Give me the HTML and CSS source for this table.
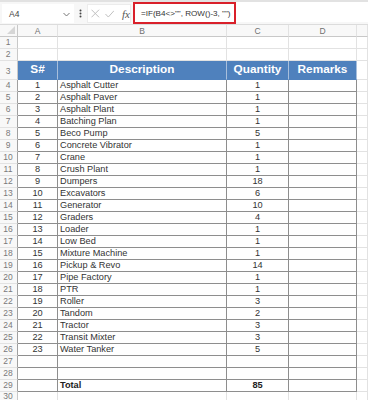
FILE: index.html
```html
<!DOCTYPE html>
<html>
<head>
<meta charset="utf-8">
<link rel="stylesheet" href="styles.css">
</head>
<body>
<div class="fbar">
  <div class="namebox"><span>A4</span>
    <svg class="chev" width="7" height="5" viewBox="0 0 7 5"><path d="M0.5 1 L3.5 4 L6.5 1" fill="none" stroke="#777" stroke-width="1"/></svg>
  </div>
  <div class="dots"><svg width="3" height="9" viewBox="0 0 3 9"><circle cx="1.5" cy="1.5" r="1" fill="#444"/><circle cx="1.5" cy="4.5" r="1" fill="#444"/><circle cx="1.5" cy="7.5" r="1" fill="#444"/></svg></div>
  <div class="tools">
    <svg width="9" height="9" viewBox="0 0 9 9"><path d="M0.5 0.5 L8.5 8.5 M8.5 0.5 L0.5 8.5" stroke="#bdbdbd" stroke-width="1"/></svg>
    <svg width="10" height="8" viewBox="0 0 10 8"><path d="M0.5 4 L3.5 7.2 L9.5 0.5" fill="none" stroke="#bdbdbd" stroke-width="1"/></svg>
    <span class="fx">fx</span>
  </div>
  <div class="formula">=IF(B4&lt;&gt;"", ROW()-3, "")</div>
  <div class="rest"></div>
</div>

<div class="sheet">
  <div class="row colhead"><div class="c rh corner"><span class="tri"></span></div><div class="c">A</div><div class="c">B</div><div class="c">C</div><div class="c">D</div><div class="c"></div></div>
  <div class="row"><div class="c rh">1</div><div class="c"></div><div class="c"></div><div class="c"></div><div class="c"></div><div class="c"></div></div>
  <div class="row"><div class="c rh">2</div><div class="c"></div><div class="c"></div><div class="c"></div><div class="c"></div><div class="c"></div></div>
  <div class="row head"><div class="c rh">3</div><div class="c h">S#</div><div class="c h">Description</div><div class="c h">Quantity</div><div class="c h">Remarks</div><div class="c"></div></div>
  <div class="row data"><div class="c rh">4</div><div class="c d n">1</div><div class="c d t">Asphalt Cutter</div><div class="c d n">1</div><div class="c d"></div><div class="c"></div></div>
  <div class="row data"><div class="c rh">5</div><div class="c d n">2</div><div class="c d t">Asphalt Paver</div><div class="c d n">1</div><div class="c d"></div><div class="c"></div></div>
  <div class="row data"><div class="c rh">6</div><div class="c d n">3</div><div class="c d t">Asphalt Plant</div><div class="c d n">1</div><div class="c d"></div><div class="c"></div></div>
  <div class="row data"><div class="c rh">7</div><div class="c d n">4</div><div class="c d t">Batching Plan</div><div class="c d n">1</div><div class="c d"></div><div class="c"></div></div>
  <div class="row data"><div class="c rh">8</div><div class="c d n">5</div><div class="c d t">Beco Pump</div><div class="c d n">5</div><div class="c d"></div><div class="c"></div></div>
  <div class="row data"><div class="c rh">9</div><div class="c d n">6</div><div class="c d t">Concrete Vibrator</div><div class="c d n">1</div><div class="c d"></div><div class="c"></div></div>
  <div class="row data"><div class="c rh">10</div><div class="c d n">7</div><div class="c d t">Crane</div><div class="c d n">1</div><div class="c d"></div><div class="c"></div></div>
  <div class="row data"><div class="c rh">11</div><div class="c d n">8</div><div class="c d t">Crush Plant</div><div class="c d n">1</div><div class="c d"></div><div class="c"></div></div>
  <div class="row data"><div class="c rh">12</div><div class="c d n">9</div><div class="c d t">Dumpers</div><div class="c d n">18</div><div class="c d"></div><div class="c"></div></div>
  <div class="row data"><div class="c rh">13</div><div class="c d n">10</div><div class="c d t">Excavators</div><div class="c d n">6</div><div class="c d"></div><div class="c"></div></div>
  <div class="row data"><div class="c rh">14</div><div class="c d n">11</div><div class="c d t">Generator</div><div class="c d n">10</div><div class="c d"></div><div class="c"></div></div>
  <div class="row data"><div class="c rh">15</div><div class="c d n">12</div><div class="c d t">Graders</div><div class="c d n">4</div><div class="c d"></div><div class="c"></div></div>
  <div class="row data"><div class="c rh">16</div><div class="c d n">13</div><div class="c d t">Loader</div><div class="c d n">1</div><div class="c d"></div><div class="c"></div></div>
  <div class="row data"><div class="c rh">17</div><div class="c d n">14</div><div class="c d t">Low Bed</div><div class="c d n">1</div><div class="c d"></div><div class="c"></div></div>
  <div class="row data"><div class="c rh">18</div><div class="c d n">15</div><div class="c d t">Mixture Machine</div><div class="c d n">1</div><div class="c d"></div><div class="c"></div></div>
  <div class="row data"><div class="c rh">19</div><div class="c d n">16</div><div class="c d t">Pickup &amp; Revo</div><div class="c d n">14</div><div class="c d"></div><div class="c"></div></div>
  <div class="row data"><div class="c rh">20</div><div class="c d n">17</div><div class="c d t">Pipe Factory</div><div class="c d n">1</div><div class="c d"></div><div class="c"></div></div>
  <div class="row data"><div class="c rh">21</div><div class="c d n">18</div><div class="c d t">PTR</div><div class="c d n">1</div><div class="c d"></div><div class="c"></div></div>
  <div class="row data"><div class="c rh">22</div><div class="c d n">19</div><div class="c d t">Roller</div><div class="c d n">3</div><div class="c d"></div><div class="c"></div></div>
  <div class="row data"><div class="c rh">23</div><div class="c d n">20</div><div class="c d t">Tandom</div><div class="c d n">2</div><div class="c d"></div><div class="c"></div></div>
  <div class="row data"><div class="c rh">24</div><div class="c d n">21</div><div class="c d t">Tractor</div><div class="c d n">3</div><div class="c d"></div><div class="c"></div></div>
  <div class="row data"><div class="c rh">25</div><div class="c d n">22</div><div class="c d t">Transit Mixter</div><div class="c d n">3</div><div class="c d"></div><div class="c"></div></div>
  <div class="row data"><div class="c rh">26</div><div class="c d n">23</div><div class="c d t">Water Tanker</div><div class="c d n">5</div><div class="c d"></div><div class="c"></div></div>
  <div class="row data"><div class="c rh">27</div><div class="c d"></div><div class="c d"></div><div class="c d"></div><div class="c d"></div><div class="c"></div></div>
  <div class="row data"><div class="c rh">28</div><div class="c d"></div><div class="c d"></div><div class="c d"></div><div class="c d"></div><div class="c"></div></div>
  <div class="row data total"><div class="c rh">29</div><div class="c d"></div><div class="c d t">Total</div><div class="c d n">85</div><div class="c d"></div><div class="c"></div></div>
  <div class="row last"><div class="c rh">30</div><div class="c"></div><div class="c"></div><div class="c"></div><div class="c"></div><div class="c"></div></div>
</div>
</body>
</html>
```

FILE: styles.css
```css
* { box-sizing: border-box; }
html, body { margin: 0; padding: 0; background: #fff; }
body {
  width: 368px;
  height: 400px;
  overflow: hidden;
  font-family: "Liberation Sans", Arial, sans-serif;
  color: #333;
}

/* formula bar */
.fbar {
  display: flex;
  height: 24px;
  border-top: 2px solid #e2e2e2;
  background: #f7f7f7;
}
.namebox {
  width: 72px;
  margin: 2px 0 1px 2px;
  background: #fff;
  display: flex;
  align-items: center;
  justify-content: space-between;
  padding: 0 4px 0 7px;
  font-size: 8.5px;
  color: #444;
}
.chev { margin-top: 1px; }
.dots {
  width: 13px;
  display: flex;
  align-items: center;
  justify-content: center;
}
.tools {
  width: 44px;
  margin: 2px 0 1px 0;
  background: #fff;
  border: 1px solid #ececec;
  display: flex;
  align-items: center;
  gap: 5px;
  padding-left: 3px;
}
.fx {
  font-family: "Liberation Serif", serif;
  font-style: italic;
  font-size: 11px;
  color: #555;
  margin-left: 3px;
}
.formula {
  width: 103px;
  margin-left: 2px;
  border: 2px solid #d9202a;
  background: #fff;
  font-size: 8.1px;
  color: #333;
  display: flex;
  align-items: center;
  padding-left: 6px;
  white-space: nowrap;
}
.rest {
  flex: 1;
  background: #fff;
  margin: 0 0 2px 0;
}

/* sheet */
.row {
  display: grid;
  grid-template-columns: 18px 40px 169px 62px 68px 1fr;
  height: 12px;
}
.c {
  border-right: 1px solid #e2e2e2;
  border-bottom: 1px solid #e2e2e2;
  font-size: 9.2px;
  line-height: 11px;
  white-space: nowrap;
  overflow: hidden;
}
.rh {
  background: #f8f8f8;
  border-right-color: #c8c8c8;
  color: #7a7a7a;
  font-size: 8.5px;
  text-align: center;
  padding-right: 1px;
}
.last .rh { line-height: 9px; }
.colhead {
  height: 13px;
  border-top: 1px solid #dcdcdc;
}
.colhead .c {
  background: #f8f8f8;
  color: #707070;
  font-size: 8.5px;
  text-align: center;
  line-height: 12px;
  border-bottom-color: #c8c8c8;
}
.corner { position: relative; }
.tri {
  position: absolute;
  right: 2px;
  bottom: 2px;
  width: 0;
  height: 0;
  border-left: 8px solid transparent;
  border-bottom: 8px solid #d6d6d6;
}

.head { height: 19px; }
.head .rh { line-height: 20px; }
.h {
  background: #4f81bd;
  border-right-color: #a8bfdc;
  border-bottom-color: #4f81bd;
  color: #fff;
  font-weight: bold;
  font-size: 11.8px;
  text-align: center;
  line-height: 17px;
}

.d {
  border-right-color: #8e8e8e;
  border-bottom-color: #8e8e8e;
}
.data .rh { border-right-color: #a0a0a0; }
.n { text-align: center; }
.t { padding-left: 2px; }
.total .d { font-weight: bold; color: #222; }
```
